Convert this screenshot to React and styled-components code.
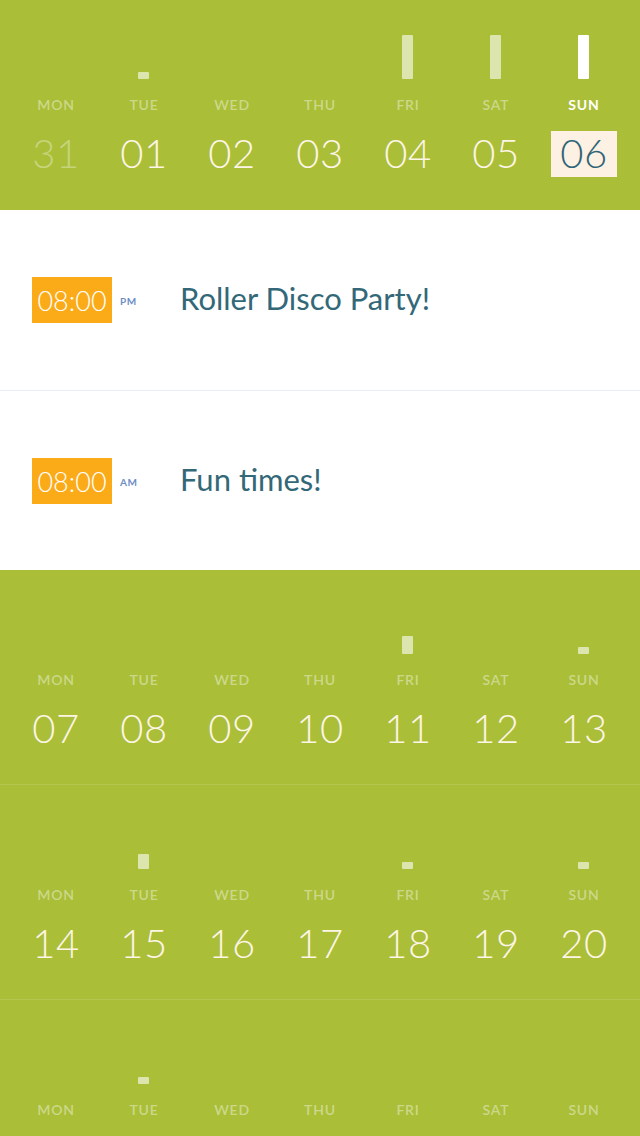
import React from "react";
import styled, { createGlobalStyle } from "styled-components";

const Global = createGlobalStyle`
  html, body { margin: 0; padding: 0; background: #aabe38; }
  body { font-family: Lato, "Open Sans", sans-serif; overflow-x: hidden; }
  * { box-sizing: border-box; }
`;

const GREEN = "#aabe38";

const Page = styled.div`
  width: 640px;
  display: flex;
  flex-direction: column;
`;

const Week = styled.section`
  background: ${GREEN};
  padding: ${(p) => (p.$first ? 35 : 40)}px 12px 33px;
  border-top: ${(p) => (p.$divider ? "1px solid #b3c650" : "none")};
  margin-top: ${(p) => (p.$divider ? "-1px" : "0")};
  display: grid;
  grid-template-columns: repeat(7, 88px);
`;

const Day = styled.div`
  display: flex;
  flex-direction: column;
  align-items: center;
`;

const BarSlot = styled.div`
  height: 44px;
  display: flex;
  align-items: flex-end;
  justify-content: center;
  padding-right: 1px;
`;

const Bar = styled.div`
  width: 11px;
  border-radius: 1px;
  background: ${(p) => (p.$active ? "#ffffff" : "rgba(255,255,255,0.6)")};
`;

const Label = styled.div`
  margin-top: 18px;
  height: 16px;
  line-height: 16px;
  font-size: 14px;
  font-weight: ${(p) => (p.$active ? 700 : 600)};
  letter-spacing: 0.8px;
  color: ${(p) => (p.$active ? "#ffffff" : "rgba(255,255,255,0.42)")};
`;

const Num = styled.div`
  margin-top: 18px;
  height: 46px;
  width: 66px;
  display: flex;
  align-items: center;
  justify-content: center;
  font-weight: 300;
  font-size: 40px;
  letter-spacing: 0.5px;
  padding-bottom: 2px;
  color: ${(p) =>
    p.$selected ? "#2f6577" : p.$dim ? "rgba(255,255,255,0.35)" : "#fdf5e6"};
  background: ${(p) => (p.$selected ? "#fdf1e4" : "transparent")};
`;

const Events = styled.div`
  background: #ffffff;
  display: flex;
  flex-direction: column;
`;

const EventRow = styled.div`
  height: 180px;
  padding-left: 32px;
  display: flex;
  align-items: center;
  border-top: ${(p) => (p.$divider ? "1px solid #e6edf7" : "none")};
`;

const TimeBadge = styled.div`
  width: 80px;
  height: 46px;
  background: #fbab18;
  color: #ffffff;
  font-weight: 300;
  font-size: 27px;
  display: flex;
  align-items: center;
  justify-content: center;
  padding-top: 1px;
`;

const Meridiem = styled.div`
  width: 68px;
  padding-left: 8px;
  font-size: 10px;
  font-weight: 700;
  letter-spacing: 0.5px;
  color: #6f8dc6;
  padding-top: 2px;
`;

const Title = styled.div`
  font-size: 31px;
  font-weight: 400;
  color: #336878;
  padding-bottom: 4px;
`;

const LABELS = ["MON", "TUE", "WED", "THU", "FRI", "SAT", "SUN"];

const weeks = [
  {
    first: true,
    days: [
      { n: "31", dim: true },
      { n: "01", bar: 7 },
      { n: "02" },
      { n: "03" },
      { n: "04", bar: 44 },
      { n: "05", bar: 44 },
      { n: "06", bar: 44, active: true, selected: true },
    ],
  },
  {
    days: [
      { n: "07" },
      { n: "08" },
      { n: "09" },
      { n: "10" },
      { n: "11", bar: 18 },
      { n: "12" },
      { n: "13", bar: 7 },
    ],
  },
  {
    divider: true,
    days: [
      { n: "14" },
      { n: "15", bar: 15 },
      { n: "16" },
      { n: "17" },
      { n: "18", bar: 7 },
      { n: "19" },
      { n: "20", bar: 7 },
    ],
  },
  {
    divider: true,
    days: [
      { n: "21" },
      { n: "22", bar: 7 },
      { n: "23" },
      { n: "24" },
      { n: "25" },
      { n: "26" },
      { n: "27" },
    ],
  },
];

function WeekRow({ week }) {
  return (
    <Week $first={week.first} $divider={week.divider}>
      {week.days.map((d, i) => (
        <Day key={i}>
          <BarSlot>
            {d.bar ? <Bar $active={d.active} style={{ height: d.bar }} /> : null}
          </BarSlot>
          <Label $active={d.active}>{LABELS[i]}</Label>
          <Num $selected={d.selected} $dim={d.dim}>
            {d.n}
          </Num>
        </Day>
      ))}
    </Week>
  );
}

const events = [
  { time: "08:00", mer: "PM", title: "Roller Disco Party!" },
  { time: "08:00", mer: "AM", title: "Fun times!" },
];

export default function App() {
  return (
    <Page>
      <Global />
      <WeekRow week={weeks[0]} />
      <Events>
        {events.map((e, i) => (
          <EventRow key={i} $divider={i > 0}>
            <TimeBadge>{e.time}</TimeBadge>
            <Meridiem>{e.mer}</Meridiem>
            <Title>{e.title}</Title>
          </EventRow>
        ))}
      </Events>
      {weeks.slice(1).map((w, i) => (
        <WeekRow key={i} week={w} />
      ))}
    </Page>
  );
}
